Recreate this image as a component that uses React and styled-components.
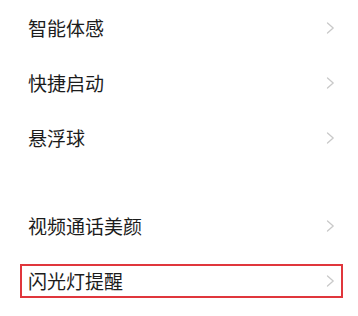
import React from 'react'
import styled, { createGlobalStyle } from 'styled-components'

const GlobalStyle = createGlobalStyle`
  html, body {
    margin: 0;
    padding: 0;
    background: #fff;
  }
  body {
    font-family: "Noto Sans CJK SC", "Noto Sans", sans-serif;
  }
`

const sections = [
  [
    { label: '智能体感' },
    { label: '快捷启动' },
    { label: '悬浮球' },
  ],
  [
    { label: '视频通话美颜' },
    { label: '闪光灯提醒', marked: true },
  ],
]

function Chevron() {
  return (
    <svg width="9" height="12" viewBox="0 0 9 12" fill="none">
      <path d="M1.5 1 L7.2 6 L1.5 11" stroke="#c9c9c9" strokeWidth="1.3" strokeLinecap="round" strokeLinejoin="round" />
    </svg>
  )
}

export default function App() {
  return (
    <>
      <GlobalStyle />
      <Page>
        {sections.map((items, i) => (
          <Section key={i}>
            {items.map((item) => (
              <Row key={item.label}>
                <Item $marked={item.marked}>
                  <Label>{item.label}</Label>
                  <Chevron />
                </Item>
              </Row>
            ))}
          </Section>
        ))}
      </Page>
    </>
  )
}

const Page = styled.div`
  width: 358px;
  height: 316px;
  box-sizing: border-box;
  padding: 0 15px 0 20px;
  display: flex;
  flex-direction: column;
  gap: 33px;
  overflow: hidden;
`

const Section = styled.div`
  display: flex;
  flex-direction: column;
`

const Row = styled.div`
  height: 55px;
  display: flex;
  align-items: center;
`

const Item = styled.div`
  flex: 1;
  height: 34px;
  box-sizing: border-box;
  border: 2px solid ${(p) => (p.$marked ? '#e0363c' : 'transparent')};
  padding: 0 6px 0 6px;
  display: flex;
  align-items: center;
  justify-content: space-between;
`

const Label = styled.span`
  font-size: 19px;
  color: #1c1c1c;
  line-height: 1;
`
